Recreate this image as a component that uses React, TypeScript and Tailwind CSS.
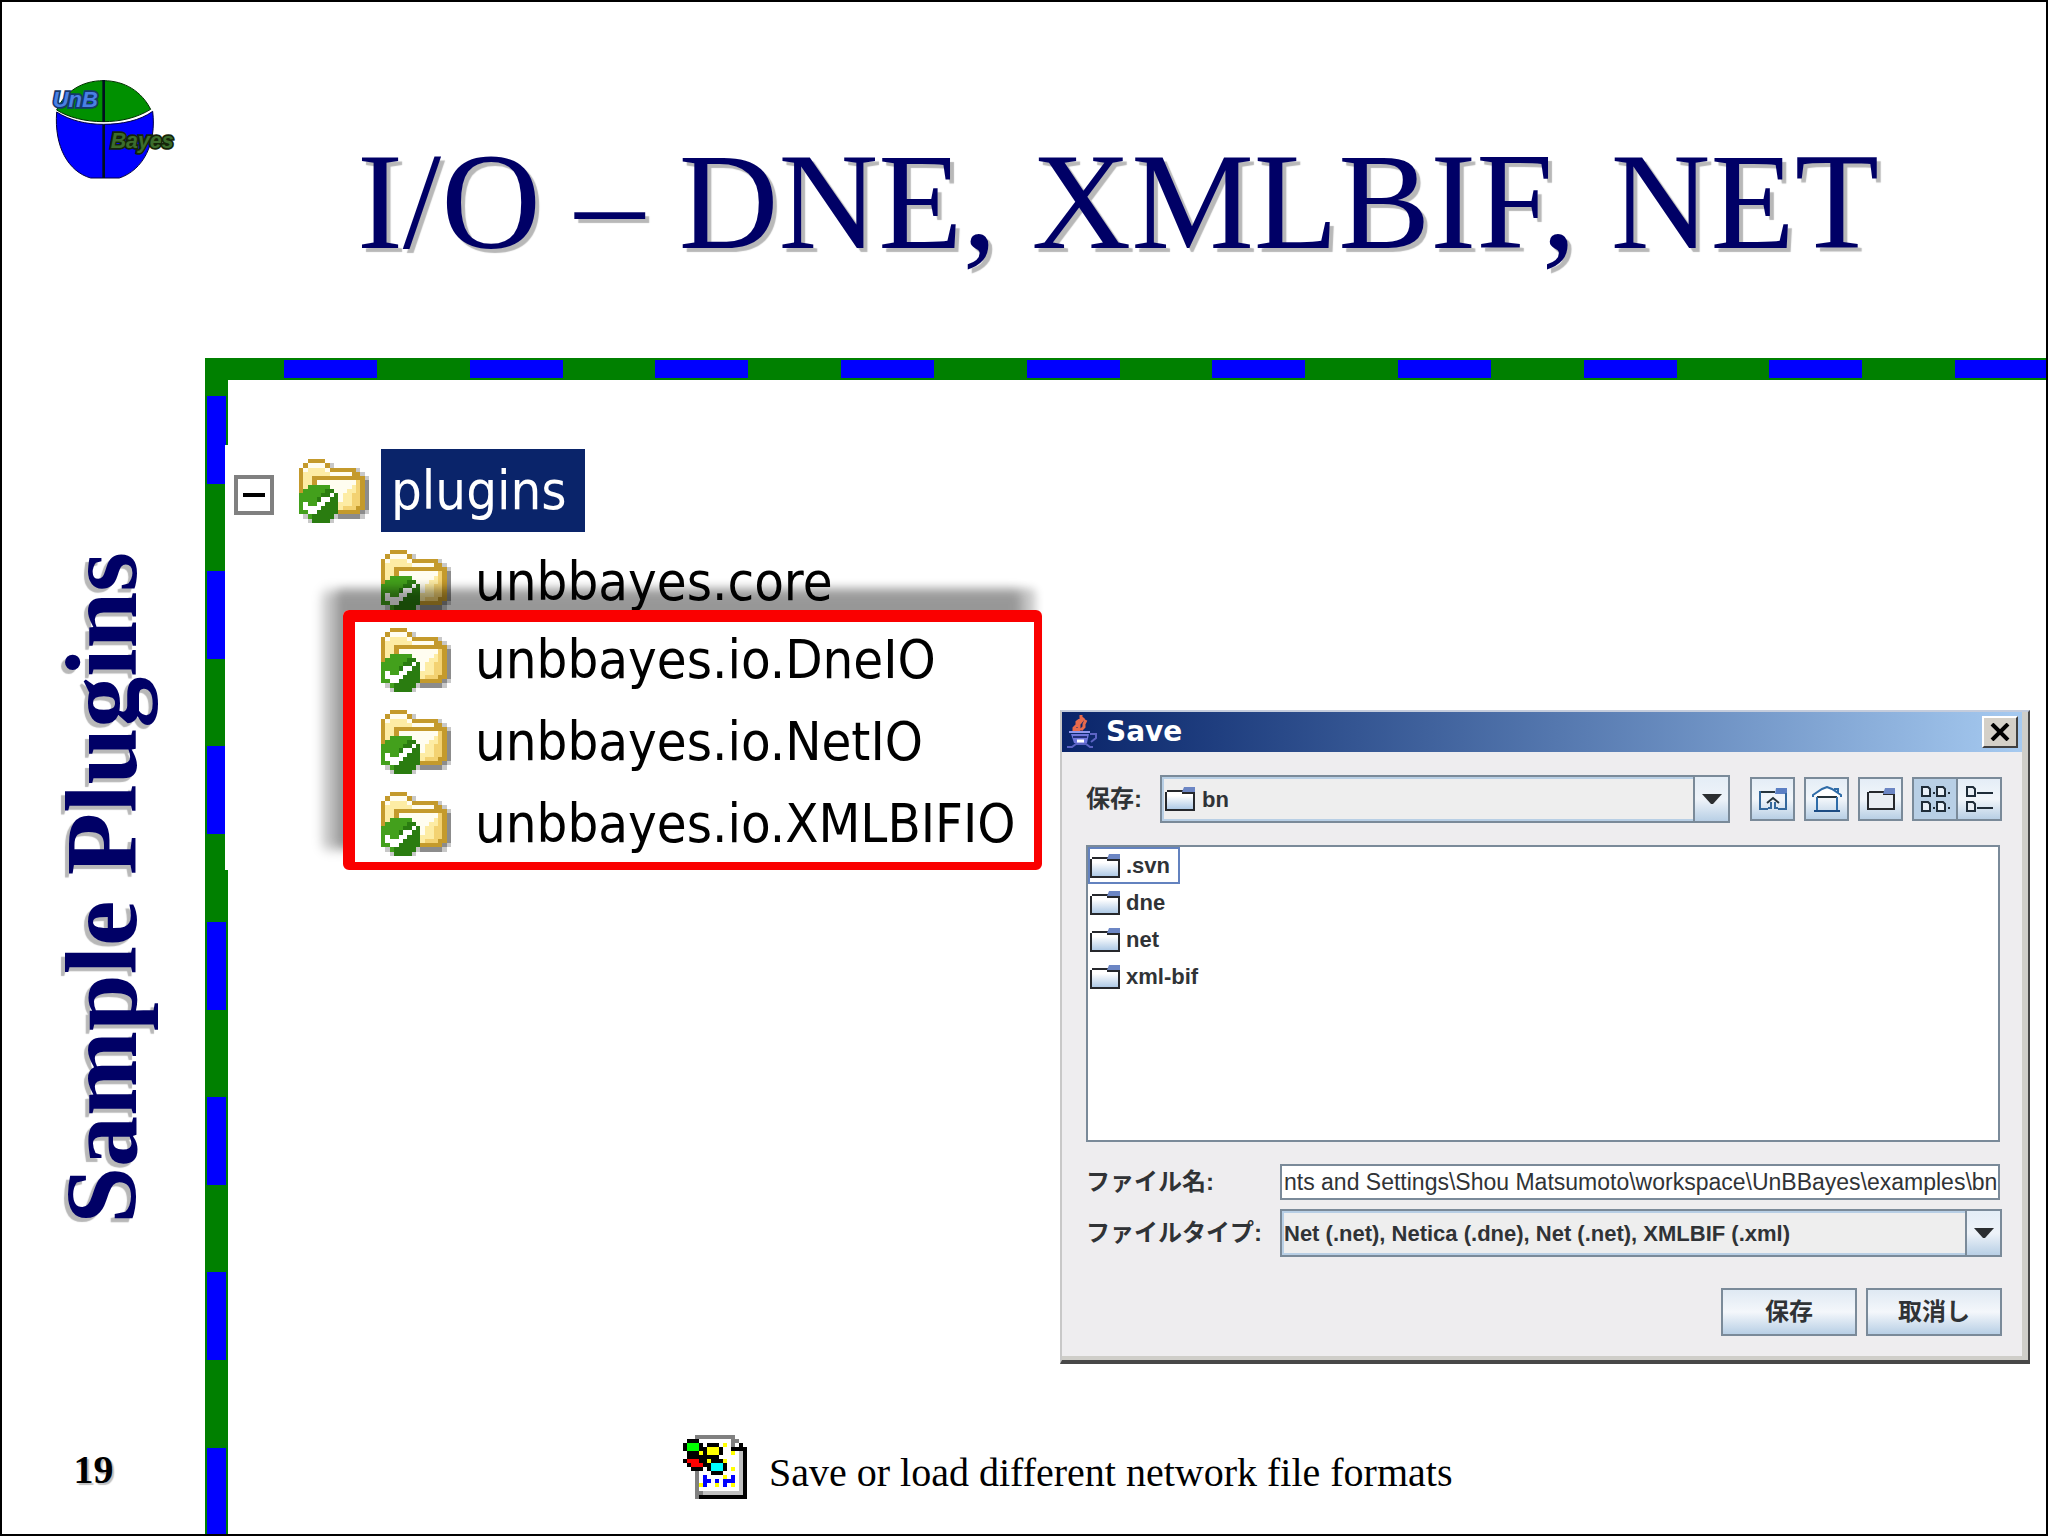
import React, { FC, ReactNode, useState } from "react";

const FOLDER_COLORS: Record<string, string> = {
  b: "#c49a2c",
  d: "#a8741c",
  w: "#fffdf0",
  l: "#fdeca4",
  y: "#f3d272",
  g: "#43a01c",
  k: "#2a7c10",
  t: "#ffffff",
  s: "#8c8c8c",
  h: "#c8c8c8",
};

const FOLDER_PIXELS = [
  "..bbbb..........",
  ".bwwwwbh........",
  "bwllllwbbbbbbh..",
  "bllllllwwwwwbbh.",
  "bllbbbbbbbbbbbbh",
  "bllbwwwwwwwwwybs",
  "blgggggwwwwwlybs",
  "bgggggkkwwwllybs",
  "gggggkktkwllyybs",
  "ggggkttkkwllyybs",
  "gtggttkkklllyybs",
  "gttttkkkklyyybbs",
  "ggttkkkkkbbbbbsh",
  ".hgkkkkkhsssssh.",
  "..hkkkkh........",
];

const NETWORK_COLORS: Record<string, string> = {
  k: "#000000",
  a: "#808080",
  c: "#c0c0c0",
  w: "#ffffff",
  g: "#00ff00",
  y: "#ffff00",
  r: "#ff0000",
  t: "#00ffff",
  b: "#0000ff",
};

const NETWORK_PIXELS = [
  "...aaaaaaaaaa...",
  ".kkkwwwwwwwwaa..",
  "kgggkwkkkwywawk.",
  "kgggkkyyykwwkkkk",
  ".kkkykyyykwwywck",
  ".kkkkkkkkwwwwwck",
  "krrrkkykkkywwwck",
  ".krrrkktttkwwwck",
  "..kkkwktttkwywck",
  "...awwwkkkwwwwck",
  "...awbwwwwywbwck",
  "...awbbwbwbbbwck",
  "...aybwwywbwywck",
  "...awwwwwwwwwwck",
  "...aacccccccccck",
  "...akkkkkkkkkkkk",
];

const PixelIcon: FC<PixelIconProps> = ({ pixels, colors, className }) => (
  <svg
    className={className}
    viewBox={`0 0 16 ${pixels.length}`}
    preserveAspectRatio="none"
    shapeRendering="crispEdges"
    aria-hidden="true"
  >
    {pixels.map((row, y) =>
      row
        .split("")
        .map((key, x) =>
          key === "." ? null : (
            <rect key={`${x}-${y}`} x={x} y={y} width="1" height="1" fill={colors[key]} />
          )
        )
    )}
  </svg>
);

const TreeFolder = () => (
  <PixelIcon
    pixels={FOLDER_PIXELS}
    colors={FOLDER_COLORS}
    className="h-16 w-[70px] shrink-0"
  />
);

const Logo = () => (
  <svg className="h-[140px] w-[160px]" viewBox="0 0 480 420" role="img" aria-label="UnBBayes">
    <path
      d="M80 150C105 95 155 62 220 62C285 62 335 95 362 148C320 174 270 185 220 185C165 185 115 172 80 150Z"
      fill="#009000"
      stroke="#003000"
      strokeWidth="3"
    />
    <path
      d="M80 156C120 182 170 193 220 193C275 193 330 182 368 154C380 250 340 330 268 354H182C115 335 72 260 80 156Z"
      fill="#0000ff"
      stroke="#000040"
      strokeWidth="3"
    />
    <path d="M221 60V186M221 194V354" stroke="#001020" strokeWidth="8" />
    <text
      x="68"
      y="142"
      fontSize="66"
      fontWeight="bold"
      fontStyle="italic"
      fill="#4a80e4"
      stroke="#14386c"
      strokeWidth="10"
      paintOrder="stroke"
      className="font-['Liberation_Sans',sans-serif]"
    >
      UnB
    </text>
    <text
      x="242"
      y="264"
      fontSize="64"
      fontWeight="bold"
      fontStyle="italic"
      fill="#3c6c2c"
      stroke="#142408"
      strokeWidth="10"
      paintOrder="stroke"
      className="font-['Liberation_Sans',sans-serif]"
    >
      Bayes
    </text>
  </svg>
);

const JavaIcon = () => (
  <svg className="h-9 w-8" viewBox="0 0 32 36" fill="none" aria-hidden="true">
    <path d="M15 1v4l-4 3v3l-3 3v4M18 4l-5 6v7M20 6l-2 4v3l-3 3M11 14v4" stroke="#e86a4c" strokeWidth="3" />
    <path d="M3 18h21" stroke="#8f96ee" strokeWidth="2" />
    <path d="M5 20h18l-2 9H8z" fill="#6f76dc" />
    <path d="M7 23h14" stroke="#23307c" strokeWidth="2" />
    <path d="M11 27h7" stroke="#ffffff" strokeWidth="3" />
    <path d="M24 20h6v4l-5 4M1 33h5l4-3h10l4 3h3" stroke="#5c64c4" strokeWidth="2" />
  </svg>
);

const MetalFolder = () => (
  <svg className="h-6 w-[30px] shrink-0" viewBox="0 0 30 24" fill="none" aria-hidden="true">
    <defs>
      <linearGradient id="metal-folder" x1="0" y1="0" x2="0" y2="1">
        <stop offset="0.2" stopColor="#ffffff" />
        <stop offset="1" stopColor="#a9c6e4" />
      </linearGradient>
    </defs>
    <path d="M1 5h16v2h12v16H1z" fill="url(#metal-folder)" />
    <path d="M2 4h16M17 6h12M29 5v18H1V5" stroke="#26282c" strokeWidth="2" />
    <path d="M19 0h11v5H17z" fill="#6c86c4" />
  </svg>
);

const UpFolderIcon = () => (
  <svg className="h-6 w-[30px]" viewBox="0 0 30 24" fill="none" aria-hidden="true">
    <path d="M18 1h11v6H17z" fill="#5c80c4" />
    <path d="M2 5h15" stroke="#26343c" strokeWidth="2" />
    <path d="M2 4v18h8M28 6v16h-8" stroke="#34689c" strokeWidth="2" />
    <path d="M9 16l6-5 6 5" stroke="#26343c" strokeWidth="2" />
    <path d="M13 15v6h-3M17 15v6h3" stroke="#34689c" strokeWidth="2" />
  </svg>
);

const HomeIcon = () => (
  <svg className="h-[26px] w-[30px]" viewBox="0 0 30 26" fill="none" aria-hidden="true">
    <path d="M1 10L11 3h7l10 7z" fill="#ffffff" />
    <path d="M1 11V9L10 3l5-2 5 2 9 6v2M22 3h4v4" stroke="#2f6ca8" strokeWidth="2" />
    <path d="M5 11h20" stroke="#26343c" strokeWidth="2" />
    <path d="M5 11v14M25 11v14" stroke="#2f6ca8" strokeWidth="2" />
    <path d="M2 25h26" stroke="#1c4c84" strokeWidth="2" />
  </svg>
);

const NewFolderIcon = () => (
  <svg className="h-6 w-[30px]" viewBox="0 0 30 24" fill="none" aria-hidden="true">
    <path d="M2 5h26v17H2z" fill="#e9edf2" />
    <path d="M3 5h15M17 7h11v15H2V5" stroke="#26282c" strokeWidth="2" />
    <path d="M19 1h10v6H17z" fill="#6c86c4" />
  </svg>
);

const GridIcon = () => (
  <svg className="h-7 w-8" viewBox="0 0 32 28" fill="none" stroke="#1f2c38" strokeWidth="2" aria-hidden="true">
    <path d="M3 2h6l2 2v7H3zM18 2h6l2 2v7h-8z" fill="#e8f0f8" />
    <path d="M3 17h6l2 2v7H3zM18 17h6l2 2v7h-8z" fill="#e8f0f8" />
    <path d="M14 8h2M29 8h2M14 23h2M29 23h2" />
  </svg>
);

const DetailsIcon = () => (
  <svg className="h-7 w-8" viewBox="0 0 32 28" fill="none" stroke="#1f2c38" strokeWidth="2" aria-hidden="true">
    <path d="M4 2h6l2 2v7H4zM4 17h6l2 2v7H4z" fill="#e8eef4" />
    <path d="M14 8h16M14 23h16" />
  </svg>
);

const ToolButton: FC<ToolButtonProps> = ({ label, children }) => (
  <button
    type="button"
    aria-label={label}
    className="flex h-11 w-[45px] items-center justify-center border-2 border-[#7a8a99] bg-linear-to-b from-[#e4edf6] via-[#f2f6fa] to-[#b8cfe5]"
  >
    {children}
  </button>
);

// select with the arrow drawn over its right edge
const ComboBox: FC<ComboBoxProps> = ({ id, options, icon }) => (
  <div className="relative h-12 min-w-0 flex-1">
    <select
      id={id}
      className={`h-full w-full appearance-none border-2 border-[#7a8a99] bg-[#eeeeee] font-bold text-[#303336] shadow-[inset_0_0_0_2px_#b8cfe5] ${
        icon ? "pl-10" : "pl-[2px]"
      }`}
    >
      {options.map((option) => (
        <option key={option}>{option}</option>
      ))}
    </select>
    {icon && (
      <span className="pointer-events-none absolute inset-y-0 left-[5px] flex items-center">
        {icon}
      </span>
    )}
    <span className="pointer-events-none absolute inset-y-0 right-0 flex w-[37px] items-center justify-center border-2 border-[#7a8a99] bg-linear-to-b from-[#e4edf6] via-[#eef3f9] to-[#b8cfe5]">
      <svg className="h-[10px] w-5" viewBox="0 0 20 10" aria-hidden="true">
        <path d="M0 0h20L11 10H9z" fill="#2b2e31" />
      </svg>
    </span>
  </div>
);

const DialogButton: FC<{ children: ReactNode }> = ({ children }) => (
  <button
    type="button"
    className="h-12 w-[136px] border-2 border-[#7a8a99] bg-linear-to-b from-[#dfe9f3] via-[#f4f7fb] to-[#b8cfe5] text-2xl font-bold text-[#303336]"
  >
    {children}
  </button>
);

const PluginTree = () => {
  const plugins = ["unbbayes.io.DneIO", "unbbayes.io.NetIO", "unbbayes.io.XMLBIFIO"];

  return (
    <section className="relative mt-[65px] -ml-[3px] w-[835px] shrink-0 self-start bg-white pt-1 font-['DejaVu_Sans_Condensed','DejaVu_Sans',sans-serif] text-[54px] leading-[76px]">
      <div className="flex h-[83px] items-center pl-[9px]">
        <button
          type="button"
          aria-label="Collapse plugins"
          className="mt-2 flex size-10 items-center justify-center border-4 border-[#808080]"
        >
          <span className="h-1 w-[22px] bg-black" />
        </button>
        <span className="ml-[25px]">
          <TreeFolder />
        </span>
        <span className="ml-3 flex h-full items-center bg-[#0a246a] px-[10px] pr-[18px] text-white">
          plugins
        </span>
      </div>
      <div className="mt-[22px] flex h-14 items-center gap-6 pl-[156px]">
        <TreeFolder />
        <span>unbbayes.core</span>
      </div>
      <ul className="relative ml-[118px] flex w-[699px] flex-col gap-[6px] rounded-md border-t-12 border-r-8 border-b-8 border-l-12 border-[#fa0000] pl-[26px] shadow-[-20px_-20px_12px_rgba(0,0,0,0.26),-6px_-22px_8px_rgba(0,0,0,0.2)]">
        {plugins.map((plugin) => (
          <li key={plugin} className="flex h-[76px] items-center gap-6">
            <TreeFolder />
            <span>{plugin}</span>
          </li>
        ))}
      </ul>
    </section>
  );
};

const SaveDialog = () => {
  const [fileName, setFileName] = useState(
    "nts and Settings\\Shou Matsumoto\\workspace\\UnBBayes\\examples\\bn"
  );
  const folders = [".svn", "dne", "net", "xml-bif"];

  return (
    <section
      role="dialog"
      aria-label="Save"
      className="mt-[330px] mr-4 flex min-w-0 flex-1 flex-col border-t-2 border-r-2 border-b-4 border-l-2 border-t-[#c4ccdc] border-r-[#484848] border-b-[#484848] border-l-[#c8c8c8] bg-[#eeedef] font-['Liberation_Sans','Noto_Sans_CJK_JP',sans-serif] text-[22px] text-[#303336] shadow-[inset_-6px_-4px_0_#cfcec9]"
    >
      <header className="mr-[6px] flex h-10 items-center bg-linear-to-r from-[#0a246a] to-[#a6caf0] pr-1 pl-1">
        <JavaIcon />
        <h2 className="ml-2 flex-1 font-['DejaVu_Sans',sans-serif] text-[28px] font-bold text-white">
          Save
        </h2>
        <button
          type="button"
          aria-label="Close"
          className="flex h-8 w-9 items-center justify-center border-2 border-t-white border-r-[#404040] border-b-[#404040] border-l-white bg-[#d4d0c8]"
        >
          <svg className="h-[18px] w-5" viewBox="0 0 20 18" aria-hidden="true">
            <path d="M2 1l16 16M18 1L2 17" stroke="#000" strokeWidth="4" />
          </svg>
        </button>
      </header>

      <form className="pr-[26px] pl-6" onSubmit={(event) => event.preventDefault()}>
        <div className="mt-[23px] flex items-center">
          <label htmlFor="folder" className="w-[74px] text-2xl font-bold">
            保存:
          </label>
          <ComboBox id="folder" options={["bn"]} icon={<MetalFolder />} />
          <div className="ml-5 flex gap-[9px]">
            <ToolButton label="Up one level">
              <UpFolderIcon />
            </ToolButton>
            <ToolButton label="Home">
              <HomeIcon />
            </ToolButton>
            <ToolButton label="New folder">
              <NewFolderIcon />
            </ToolButton>
            <div className="flex">
              <button
                type="button"
                aria-label="List"
                className="flex h-11 w-[46px] items-center justify-center border-2 border-[#7a8a99] bg-[#b8cfe5]"
              >
                <GridIcon />
              </button>
              <button
                type="button"
                aria-label="Details"
                className="flex h-11 w-11 items-center justify-center border-2 border-l-0 border-[#7a8a99] bg-linear-to-b from-[#e4edf6] via-[#f2f6fa] to-[#b8cfe5]"
              >
                <DetailsIcon />
              </button>
            </div>
          </div>
        </div>

        <ul className="mt-[22px] mr-[2px] flex h-[297px] flex-col items-start border-2 border-[#7a8a99] bg-white font-bold">
          {folders.map((folder, index) => (
            <li
              key={folder}
              className={`flex h-[37px] items-center gap-[6px] border-2 pr-2 ${
                index === 0 ? "border-[#6382bf]" : "border-transparent"
              }`}
            >
              <MetalFolder />
              {folder}
            </li>
          ))}
        </ul>

        <div className="mt-[22px] flex items-center">
          <label htmlFor="file-name" className="w-[194px] text-2xl font-bold">
            ファイル名:
          </label>
          <input
            id="file-name"
            type="text"
            value={fileName}
            onChange={(event) => setFileName(event.target.value)}
            className="mr-[2px] h-9 min-w-0 flex-1 border-2 border-[#7a8a99] bg-white pl-[2px] text-[23px]"
          />
        </div>
        <div className="mt-[9px] flex items-center">
          <label htmlFor="file-type" className="w-[194px] text-2xl font-bold">
            ファイルタイプ:
          </label>
          <ComboBox
            id="file-type"
            options={["Net (.net), Netica (.dne), Net (.net), XMLBIF (.xml)"]}
          />
        </div>

        <div className="mt-[31px] mb-6 flex justify-end gap-[9px]">
          <DialogButton>保存</DialogButton>
          <DialogButton>取消し</DialogButton>
        </div>
      </form>
    </section>
  );
};

const App = () => {
  return (
    <div className="flex min-h-screen flex-col border-2 border-black bg-white font-['Liberation_Serif',serif] text-black">
      <header className="flex h-[356px] items-start pt-[58px]">
        <div className="ml-7 w-[160px] shrink-0">
          <Logo />
        </div>
        <h1 className="mt-[62px] flex-1 text-center text-[138px] leading-[160px] whitespace-nowrap text-[#000066] [text-shadow:4px_4px_1px_#b8b8b8]">
          I/O – DNE, XMLBIF, NET
        </h1>
      </header>

      <div className="flex flex-1">
        <aside className="flex w-[203px] shrink-0 flex-col items-center justify-between pt-[194px] pr-1 pb-[34px]">
          <p className="rotate-180 text-[102px] leading-[116px] font-bold whitespace-nowrap text-[#000066] [text-shadow:-4px_-4px_1px_#b8b8b8] [writing-mode:vertical-rl]">
            Sample Plugins
          </p>
          <p className="mr-4 text-[40px] font-bold [text-shadow:2px_2px_1px_#c0c0c0]">19</p>
        </aside>

        <div className="flex w-[23px] shrink-0 bg-[#008000] px-[2px] pt-[38px]">
          <div className="flex-1 bg-[repeating-linear-gradient(180deg,#0000ff_0_88px,#008000_88px_175px,#0000ff_175px_263px,#008000_263px_350px,#0000ff_350px_438px,#008000_438px_526px)]" />
        </div>

        <main className="flex min-w-0 flex-1 flex-col">
          <div className="flex h-[22px] bg-[#008000] py-[2px] pl-14">
            <div className="flex-1 bg-[repeating-linear-gradient(90deg,#0000ff_0_93px,#008000_93px_186px,#0000ff_186px_279px,#008000_279px_371px,#0000ff_371px_464px,#008000_464px_557px)]" />
          </div>
          <div className="flex items-start">
            <PluginTree />
            <SaveDialog />
          </div>
          <footer className="mt-[67px] flex items-center gap-[22px] pl-[455px]">
            <PixelIcon
              pixels={NETWORK_PIXELS}
              colors={NETWORK_COLORS}
              className="size-16 shrink-0"
            />
            <p className="mt-3 text-[40px]">Save or load different network file formats</p>
          </footer>
        </main>
      </div>
    </div>
  );
};

export default App;

type PixelIconProps = {
  pixels: string[];
  colors: Record<string, string>;
  className: string;
};

type ToolButtonProps = {
  label: string;
  children: ReactNode;
};

type ComboBoxProps = {
  id: string;
  options: string[];
  icon?: ReactNode;
};
